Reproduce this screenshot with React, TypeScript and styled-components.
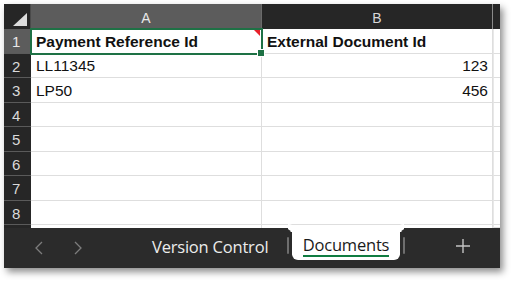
import React from "react";
import styled, { createGlobalStyle } from "styled-components";

const GlobalStyle = createGlobalStyle`
  html, body {
    margin: 0;
    padding: 0;
    background: #ffffff;
  }
`;

const rows: { n: number; a: string; b: string; bold?: boolean }[] = [
  { n: 1, a: "Payment Reference Id", b: "External Document Id", bold: true },
  { n: 2, a: "LL11345", b: "123" },
  { n: 3, a: "LP50", b: "456" },
  { n: 4, a: "", b: "" },
  { n: 5, a: "", b: "" },
  { n: 6, a: "", b: "" },
  { n: 7, a: "", b: "" },
  { n: 8, a: "", b: "" },
];

const App = () => {
  return (
    <>
      <GlobalStyle />
      <Page>
        <Window>
          <Sheet>
            <Corner>
              <CornerTriangle />
            </Corner>
            <ColHeader selected>A</ColHeader>
            <ColHeader>B</ColHeader>
            <HeaderRest />

            {rows.map(r => (
              <React.Fragment key={r.n}>
                <RowHeader selected={r.n === 1}>{r.n}</RowHeader>
                <Cell bold={r.bold} active={r.n === 1}>
                  {r.a}
                  {r.n === 1 && <CommentMark />}
                  {r.n === 1 && <FillHandle />}
                </Cell>
                <Cell bold={r.bold} numeric={!r.bold && r.b !== ""}>{r.b}</Cell>
                <CellRest />
              </React.Fragment>
            ))}

            <RowHeader partial />
            <Cell partial />
            <Cell partial />
            <CellRest />
          </Sheet>

          <TabBar>
            <NavArrows>
              <svg width="10" height="14" viewBox="0 0 10 14">
                <polyline points="8,1 2,7 8,13" fill="none" stroke="#7d7d7d" strokeWidth="1.3" />
              </svg>
              <svg width="10" height="14" viewBox="0 0 10 14">
                <polyline points="2,1 8,7 2,13" fill="none" stroke="#7d7d7d" strokeWidth="1.3" />
              </svg>
            </NavArrows>
            <Tab>Version Control</Tab>
            <Divider />
            <ActiveTab>
              <ActiveLabel>Documents</ActiveLabel>
            </ActiveTab>
            <Divider />
            <AddButton>
              <svg width="16" height="16" viewBox="0 0 16 16">
                <path d="M8 1 V15 M1 8 H15" stroke="#c4c4c4" strokeWidth="1.4" />
              </svg>
            </AddButton>
          </TabBar>
        </Window>
      </Page>
    </>
  );
};

const Page = styled.div`
  padding: 4px 0 0 4px;
  width: 512px;
  height: 281px;
  box-sizing: border-box;
`;

const Window = styled.div`
  width: 496px;
  height: 264px;
  display: flex;
  flex-direction: column;
  background: #ffffff;
  box-shadow: 3px 4px 7px rgba(0, 0, 0, 0.45);
  overflow: hidden;
`;

const Sheet = styled.div`
  display: grid;
  grid-template-columns: 27px 231px 231px 7px;
  grid-template-rows: 25px repeat(8, 24.5px) 3px;
  font-family: "Liberation Sans", Arial, sans-serif;
`;

const Corner = styled.div`
  background: #262626;
  position: relative;
  border-right: 1px solid #4a4a4a;
`;

const CornerTriangle = styled.div`
  position: absolute;
  right: 3px;
  bottom: 3px;
  width: 0;
  height: 0;
  border-left: 14px solid transparent;
  border-bottom: 13px solid #dcdcdc;
`;

const ColHeader = styled.div<{ selected?: boolean }>`
  background: ${p => (p.selected ? "#5c5c5c" : "#262626")};
  color: ${p => (p.selected ? "#e8e8e8" : "#d8d8d8")};
  border-right: 1px solid ${p => (p.selected ? "#6a6a6a" : "#8a8a8a")};
  display: flex;
  align-items: center;
  justify-content: center;
  font-size: 14px;
  padding-top: 2px;
  box-sizing: border-box;
`;

const HeaderRest = styled.div`
  background: #262626;
`;

const RowHeader = styled.div<{ selected?: boolean; partial?: boolean }>`
  background: ${p => (p.selected ? "#5c5c5c" : "#262626")};
  color: ${p => (p.selected ? "#e8e8e8" : "#dadada")};
  border-bottom: ${p => (p.partial ? "none" : "1px solid #5a5a5a")};
  display: flex;
  align-items: center;
  padding: 2px 0 0 8px;
  font-size: 15px;
  box-sizing: border-box;
  overflow: hidden;
`;

const Cell = styled.div<{ bold?: boolean; numeric?: boolean; active?: boolean; partial?: boolean }>`
  position: relative;
  display: flex;
  align-items: center;
  justify-content: ${p => (p.numeric ? "flex-end" : "flex-start")};
  padding: 2px 4px 0 5px;
  border-right: 1px solid #dedede;
  border-bottom: ${p => (p.partial ? "none" : "1px solid #dedede")};
  font-size: 15.5px;
  font-weight: ${p => (p.bold ? 700 : 400)};
  color: #111111;
  box-sizing: border-box;
  white-space: nowrap;
  ${p => p.active && `
    outline: 2px solid #1e7145;
    outline-offset: -1px;
    z-index: 1;
  `}
`;

const CellRest = styled.div`
  border-bottom: 1px solid #dedede;
  border-left: 1px solid #e8e8e8;
`;

const CommentMark = styled.span`
  position: absolute;
  top: 1px;
  right: 1px;
  width: 0;
  height: 0;
  border-left: 6px solid transparent;
  border-top: 6px solid #e8202a;
`;

const FillHandle = styled.span`
  position: absolute;
  right: -4px;
  bottom: -4px;
  width: 6px;
  height: 6px;
  background: #1e7145;
  border: 1px solid #ffffff;
`;

const TabBar = styled.div`
  flex: 1;
  background: #2b2b2b;
  display: flex;
  align-items: flex-start;
  font-family: "Open Sans", "Noto Sans", sans-serif;
`;

const NavArrows = styled.div`
  display: flex;
  gap: 29px;
  padding: 13px 0 0 30px;
  width: 144px;
  box-sizing: border-box;
`;

const Tab = styled.div`
  color: #ececec;
  font-size: 16.5px;
  padding: 7px 0 0 4px;
  width: 139px;
  box-sizing: border-box;
  letter-spacing: -0.2px;
`;

const Divider = styled.div`
  width: 2px;
  height: 17px;
  margin-top: 9px;
  background: #6e6e6e;
  border-radius: 1px;
`;

const ActiveTab = styled.div`
  position: relative;
  background: #ffffff;
  width: 108px;
  height: 32px;
  margin: 0 3px;
  border-radius: 0 0 6px 6px;
  display: flex;
  justify-content: center;

  &::before,
  &::after {
    content: "";
    position: absolute;
    top: 0;
    width: 8px;
    height: 8px;
  }
  &::before {
    left: -8px;
    border-top-right-radius: 8px;
    box-shadow: 4px -4px 0 0 #ffffff;
  }
  &::after {
    right: -8px;
    border-top-left-radius: 8px;
    box-shadow: -4px -4px 0 0 #ffffff;
  }
`;

const ActiveLabel = styled.div`
  color: #1a1a1a;
  font-size: 16.5px;
  padding-top: 5px;
  height: 22px;
  letter-spacing: -0.2px;
  border-bottom: 2px solid #107c41;
`;

const AddButton = styled.div`
  flex: 1;
  display: flex;
  justify-content: center;
  padding-top: 10px;
  padding-left: 20px;
`;

export default App;
